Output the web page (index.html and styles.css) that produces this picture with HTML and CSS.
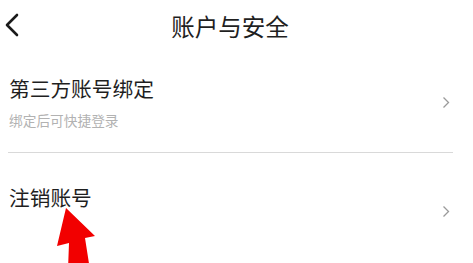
FILE: index.html
```html
<!DOCTYPE html>
<html lang="zh-CN">
<head>
    <meta charset="UTF-8">
    <title>账户与安全</title>
    <link rel="stylesheet" href="styles.css">
</head>
<body>

<div class="page">
    <div class="header">
        <div class="back">
            <svg width="24" height="52" viewBox="0 0 24 52">
                <polyline points="17,15 7,25 17,35" fill="none" stroke="#1a1a1a" stroke-width="2.6" stroke-linecap="round" stroke-linejoin="round"/>
            </svg>
        </div>
        <div class="title">账户与安全</div>
    </div>

    <div class="list">
        <div class="item item-bind">
            <div class="item-body">
                <div class="item-title">第三方账号绑定</div>
                <div class="item-sub">绑定后可快捷登录</div>
            </div>
            <svg class="arrow-right" width="8" height="13" viewBox="0 0 8 13">
                <polyline points="1.5,1.5 6.5,6.5 1.5,11.5" fill="none" stroke="#9a9a9a" stroke-width="1.3"/>
            </svg>
        </div>
        <div class="item item-cancel">
            <div class="item-body">
                <div class="item-title">注销账号</div>
            </div>
            <svg class="arrow-right" width="8" height="13" viewBox="0 0 8 13">
                <polyline points="1.5,1.5 6.5,6.5 1.5,11.5" fill="none" stroke="#9a9a9a" stroke-width="1.3"/>
            </svg>
        </div>
    </div>

    <!-- red pointer drawn over the screenshot -->
    <svg class="pointer" width="473" height="263" viewBox="0 0 473 263">
        <polygon points="66,208 95,236 85,238 90,270 68,270 69,243 57,246" fill="#f20000"/>
    </svg>
</div>

</body>
</html>
```

FILE: styles.css
```css
body {
    margin: 0;
    background: #fff;
    font-family: "Noto Sans CJK SC", "Noto Sans", sans-serif;
    color: #1f1f1f;
}
.page {
    position: relative;
    width: 473px;
    height: 263px;
    overflow: hidden;
}
.header {
    display: flex;
    align-items: center;
    height: 52px;
    padding-right: 43px;
}
.back {
    width: 30px;
    height: 52px;
}
.title {
    flex: 1;
    text-align: center;
    font-size: 23.5px;
    line-height: 52px;
}
.list {
    margin: 0 20px 0 8px;
}
.item {
    display: flex;
    align-items: center;
    justify-content: space-between;
    padding-left: 1px;
    padding-right: 3px;
}
.item-bind {
    height: 100px;
    border-bottom: 1px solid #d9d9d9;
}
.item-cancel {
    height: 116px;
}
.item-body {
    display: flex;
    flex-direction: column;
}
.item-title {
    font-size: 20.7px;
    line-height: 28px;
}
.item-sub {
    font-size: 13.7px;
    line-height: 20px;
    margin-top: 8px;
    color: #b2b2b2;
}
.item-cancel .item-body {
    margin-top: -28px;
}
.pointer {
    position: absolute;
    left: 0;
    top: 0;
}
```
